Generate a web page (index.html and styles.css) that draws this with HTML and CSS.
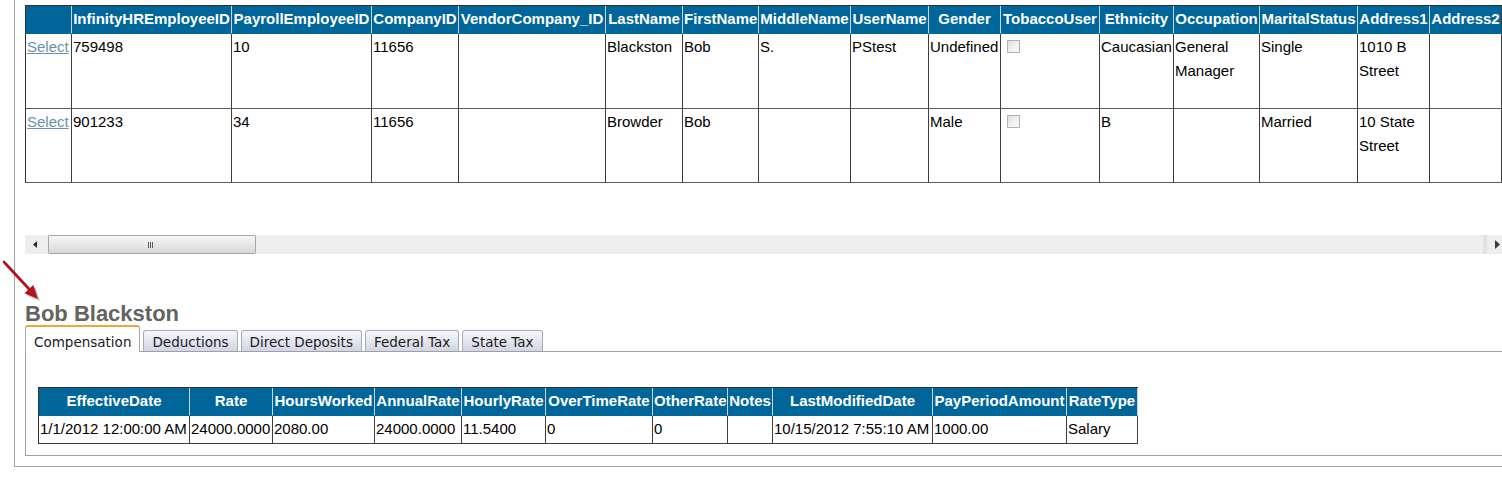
FILE: index.html
```html
<!DOCTYPE html>
<html>
<head>
<meta charset="utf-8">
<title>Employees</title>
<link rel="stylesheet" href="styles.css">
</head>
<body>
<div class="page">
  <div class="grid-wrap">
    <div class="grid-view">
      <table class="grid">
        <thead>
          <tr>
            <th></th><th>InfinityHREmployeeID</th><th>PayrollEmployeeID</th><th>CompanyID</th><th>VendorCompany_ID</th><th>LastName</th><th>FirstName</th><th>MiddleName</th><th>UserName</th><th>Gender</th><th>TobaccoUser</th><th>Ethnicity</th><th>Occupation</th><th>MaritalStatus</th><th>Address1</th><th>Address2</th>
          </tr>
        </thead>
        <tbody>
          <tr>
            <td><a href="#" class="sel">Select</a></td><td>759498</td><td>10</td><td>11656</td><td></td><td>Blackston</td><td>Bob</td><td>S.</td><td>PStest</td><td>Undefined</td><td><span class="cb"></span></td><td>Caucasian</td><td>General Manager</td><td>Single</td><td>1010 B Street</td><td></td>
          </tr>
          <tr>
            <td><a href="#" class="sel">Select</a></td><td>901233</td><td>34</td><td>11656</td><td></td><td>Browder</td><td>Bob</td><td></td><td></td><td>Male</td><td><span class="cb"></span></td><td>B</td><td></td><td>Married</td><td>10 State Street</td><td></td>
          </tr>
        </tbody>
      </table>
    </div>
    <div class="hscroll">
      <div class="sb-btn sb-left"><svg width="4" height="7" viewBox="0 0 4 7"><polygon points="4,0 4,7 0,3.5" fill="#2a2a2a"/></svg></div>
      <div class="sb-thumb"><span class="grip"></span></div>
      <div class="sb-track"></div>
      <div class="sb-end"></div>
      <div class="sb-btn sb-right"><svg width="5" height="9" viewBox="0 0 5 9"><polygon points="0,0 5,4.5 0,9" fill="#3a3a3a"/></svg></div>
    </div>
  </div>

  <svg class="pointer" width="46" height="48" viewBox="0 0 46 48">
    <g fill="#000" opacity="0.22" transform="translate(2 2)">
      <line x1="4" y1="6" x2="29" y2="33" stroke="#000" stroke-width="2.6"/>
      <polygon points="38,43 24.4,37.3 33.3,29"/>
    </g>
    <line x1="4" y1="6" x2="29" y2="33" stroke="#b5121b" stroke-width="2.6" stroke-linecap="round"/>
    <polygon points="38,43 24.4,37.3 33.3,29" fill="#b5121b"/>
  </svg>

  <h2 class="name">Bob Blackston</h2>

  <div class="tabset">
    <ul class="tabs">
      <li class="tab active">Compensation</li>
      <li class="tab">Deductions</li>
      <li class="tab">Direct Deposits</li>
      <li class="tab">Federal Tax</li>
      <li class="tab">State Tax</li>
    </ul>
    <div class="panel">
      <table class="comp">
        <thead>
          <tr>
            <th>EffectiveDate</th><th>Rate</th><th>HoursWorked</th><th>AnnualRate</th><th>HourlyRate</th><th>OverTimeRate</th><th>OtherRate</th><th>Notes</th><th>LastModifiedDate</th><th>PayPeriodAmount</th><th>RateType</th>
          </tr>
        </thead>
        <tbody>
          <tr>
            <td>1/1/2012 12:00:00 AM</td><td>24000.0000</td><td>2080.00</td><td>24000.0000</td><td>11.5400</td><td>0</td><td>0</td><td></td><td>10/15/2012 7:55:10 AM</td><td>1000.00</td><td>Salary</td>
          </tr>
        </tbody>
      </table>
    </div>
  </div>
</div>
</body>
</html>
```

FILE: styles.css
```css
* { box-sizing: border-box; }

body {
  margin: 0;
  font-family: "Liberation Sans", Arial, sans-serif;
  font-size: 15px;
  color: #000;
  background: #fff;
}

.page {
  margin-left: 14px;
  border-left: 1px solid #a3a3a3;
  border-bottom: 1px solid #a3a3a3;
  padding: 0 0 10px 10px;
}

/* ---------- main grid ---------- */
.grid-view {
  height: 235px;
  padding-top: 5px;
  overflow: hidden;
}

.grid, .comp {
  border-collapse: separate;
  border-spacing: 0;
  table-layout: fixed;
  border-top: 1px solid #333;
  border-left: 1px solid #333;
}

.grid { width: 1477px; }
.comp { width: 1100px; }

.grid th, .comp th {
  background: #006699;
  color: #fff;
  font-weight: bold;
  text-align: center;
  white-space: nowrap;
  padding: 1px 1px 2px;
  line-height: 24px;
  border-right: 1px solid #c9d6e1;
  border-bottom: 1px solid #006699;
}

.grid th:last-child { border-right-color: #3e3e3e; }

.grid td {
  padding: 1px 1px 0;
  line-height: 24px;
  vertical-align: top;
  border-right: 1px solid #3e3e3e;
  border-bottom: 1px solid #5c5c5c;
}

.grid tbody tr { height: 75px; }
.grid tbody tr:last-child { height: 74px; }

.grid th:nth-child(1) { width: 46px; }
.grid th:nth-child(2) { width: 160px; }
.grid th:nth-child(3) { width: 140px; }
.grid th:nth-child(4) { width: 87px; }
.grid th:nth-child(5) { width: 147px; }
.grid th:nth-child(6) { width: 77px; }
.grid th:nth-child(7) { width: 76px; }
.grid th:nth-child(8) { width: 92px; }
.grid th:nth-child(9) { width: 78px; }
.grid th:nth-child(10) { width: 72px; }
.grid th:nth-child(11) { width: 99px; }
.grid th:nth-child(12) { width: 74px; }
.grid th:nth-child(13) { width: 86px; }
.grid th:nth-child(14) { width: 98px; }
.grid th:nth-child(15) { width: 72px; }
.grid th:nth-child(16) { width: 72px; }

.sel {
  color: #6a93aa;
  text-decoration: underline;
}

.cb {
  display: inline-block;
  vertical-align: top;
  width: 13px;
  height: 13px;
  margin: 5px 0 0 5px;
  border: 1px solid #b2b2b2;
  background: linear-gradient(135deg, #dedede, #f2f2f2 60%, #fbfbfb);
}

/* ---------- scrollbar ---------- */
.hscroll {
  display: flex;
  height: 19px;
  background: #eeeeee;
}

.sb-btn {
  display: flex;
  align-items: center;
}

.sb-left { width: 23px; padding-left: 8px; }
.sb-right { width: 15px; padding-left: 8px; }

.sb-thumb {
  width: 208px;
  border: 1px solid #a5a5a5;
  border-radius: 2px;
  background: linear-gradient(#f8f8f8, #e9e9e9 45%, #d9d9d9);
  display: flex;
  align-items: center;
  justify-content: center;
}

.grip {
  width: 5px;
  height: 6px;
  margin-right: 3px;
  background: repeating-linear-gradient(90deg, #5e5e5e 0 1px, transparent 1px 2px);
}

.sb-track { flex: 1; }
.sb-end { width: 4px; background: #e2e2e2; }

/* ---------- annotation arrow ---------- */
.pointer {
  position: absolute;
  left: 0;
  top: 256px;
}

/* ---------- detail ---------- */
.name {
  margin: 49px 0 0;
  font-size: 22px;
  line-height: 22px;
  font-weight: bold;
  color: #636363;
}

.tabs {
  display: flex;
  align-items: flex-end;
  gap: 3px;
  list-style: none;
  margin: 0;
  padding: 0;
  border-bottom: 1px solid #a0a0a0;
  font-family: "DejaVu Sans", Verdana, sans-serif;
  font-size: 13.5px;
}

.tab {
  border: 1px solid #a4acbd;
  border-bottom: none;
  border-radius: 3px 3px 0 0;
  background: linear-gradient(#f7f8fc, #e4e7f0 50%, #d1d5e5);
  padding: 2px 8px 0;
  line-height: 18px;
  color: #1b1b1b;
}

.tab.active {
  background: #fff;
  border-color: #aaaaaa;
  border-top: 2px solid #f3a53a;
  padding: 6px 8px 1px;
  margin-bottom: -1px;
}

.panel {
  border-left: 1px solid #a0a0a0;
  border-bottom: 1px solid #a0a0a0;
  padding: 35px 0 11px 12px;
}

.comp td {
  padding: 1px 1px 2px;
  line-height: 24px;
  white-space: nowrap;
  border-right: 1px solid #3e3e3e;
  border-bottom: 1px solid #3e3e3e;
}

.comp th:nth-child(1) { width: 151px; }
.comp th:nth-child(2) { width: 83px; }
.comp th:nth-child(3) { width: 102px; }
.comp th:nth-child(4) { width: 87px; }
.comp th:nth-child(5) { width: 84px; }
.comp th:nth-child(6) { width: 107px; }
.comp th:nth-child(7) { width: 75px; }
.comp th:nth-child(8) { width: 45px; }
.comp th:nth-child(9) { width: 160px; }
.comp th:nth-child(10) { width: 134px; }
.comp th:nth-child(11) { width: 71px; }
```
